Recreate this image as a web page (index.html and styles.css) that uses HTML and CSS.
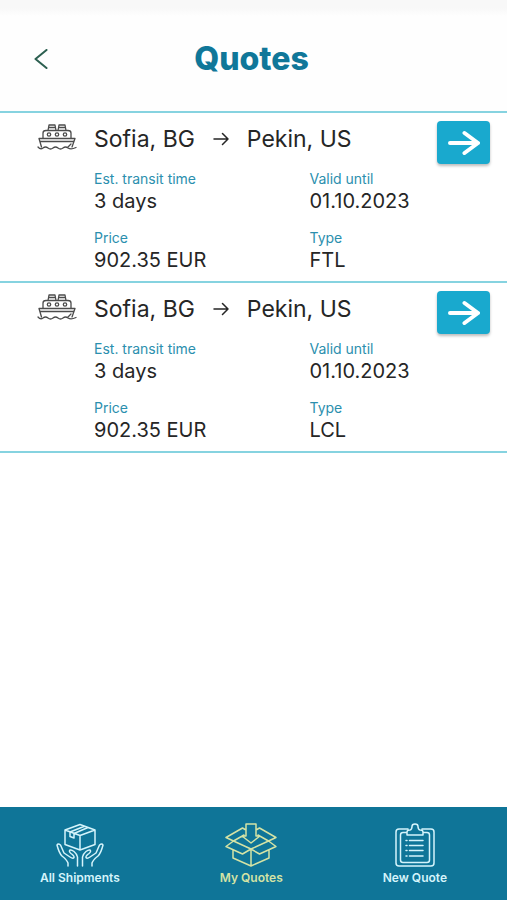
FILE: index.html
```html
<!DOCTYPE html>
<html lang="en">
<head>
<meta charset="utf-8">
<meta name="viewport" content="width=device-width, initial-scale=1">
<title>Quotes</title>
<link rel="stylesheet" href="styles.css">
</head>
<body>
<svg class="sprite" aria-hidden="true">
  <symbol id="ship" viewBox="0 0 40 28">
    <path d="M2 15.500H38L35 24M2 15.500L4.500 24M3 18.500H36.500M6 15V10Q6 7.500 9 7.500H31Q34 7.500 34 10V15M11 7.500L12 2H18L19 7.500M11.500 4.500H18.500M21 7.500L22 2H28L29 7.500M21.500 4.500H28.500M1 24Q3.500 27 6 25Q8.500 23 11 25Q13.500 27 16 25Q18.500 23 21 25Q23.500 27 26 25Q28.500 23 31 25Q34 27 39 24.500M34 21L31 24"/>
    <circle cx="12" cy="11.500" r="1.700"/><circle cx="20" cy="11.500" r="1.700"/><circle cx="28" cy="11.500" r="1.700"/>
  </symbol>
  <symbol id="route" viewBox="0 0 16 14">
    <path d="M1 7H15M9.500 1.500L15 7L9.500 12.500"/>
  </symbol>
  <symbol id="go" viewBox="0 0 32 26">
    <path d="M2 13H30M16.500 3L30 13L16.500 23"/>
  </symbol>
</svg>

<header class="header">
  <button class="back" type="button" aria-label="Back">
    <svg viewBox="0 0 14 20"><path d="M12.500 1L1.500 10L12.500 19"/></svg>
  </button>
  <h1 class="title">Quotes</h1>
</header>

<main class="quotes">
  <article class="quote">
    <svg class="ship"><use href="#ship"/></svg>
    <div class="top">
      <h2 class="route">Sofia, BG <svg class="to"><use href="#route"/></svg> Pekin, US</h2>
      <button class="open" type="button" aria-label="Open quote"><svg><use href="#go"/></svg></button>
    </div>
    <dl class="facts">
      <div><dt>Est. transit time</dt><dd>3 days</dd></div>
      <div><dt>Valid until</dt><dd>01.10.2023</dd></div>
      <div><dt>Price</dt><dd>902.35 EUR</dd></div>
      <div><dt>Type</dt><dd>FTL</dd></div>
    </dl>
  </article>
  <article class="quote">
    <svg class="ship"><use href="#ship"/></svg>
    <div class="top">
      <h2 class="route">Sofia, BG <svg class="to"><use href="#route"/></svg> Pekin, US</h2>
      <button class="open" type="button" aria-label="Open quote"><svg><use href="#go"/></svg></button>
    </div>
    <dl class="facts">
      <div><dt>Est. transit time</dt><dd>3 days</dd></div>
      <div><dt>Valid until</dt><dd>01.10.2023</dd></div>
      <div><dt>Price</dt><dd>902.35 EUR</dd></div>
      <div><dt>Type</dt><dd>LCL</dd></div>
    </dl>
  </article>
</main>

<nav class="tabs">
  <a class="tab" href="#shipments">
    <svg viewBox="0 0 48 44">
      <path d="M24 1.500L39 7V21.500L24 27L9 21.500V7ZM9 7L24 12.500L39 7M24 12.500V27M14 9V13.500L18 15V10.500L32 4.500M14 9L28.500 3.200"/>
      <path d="M12 43V40Q11 37 6 33Q3 30 1 22Q2 20 4.500 22L8 30L14 34Q17 36 18 34.500Q18.500 33 15 30.500Q12.500 28.500 14 27Q15.500 26.500 18 28.500Q21 31 21.500 34V43"/>
      <path d="M36 43V40Q37 37 42 33Q45 30 47 22Q46 20 43.500 22L40 30L34 34Q31 36 30 34.500Q29.500 33 33 30.500Q35.500 28.500 34 27Q32.500 26.500 30 28.500Q27 31 26.500 34V43"/>
    </svg>
    <span>All Shipments</span>
  </a>
  <a class="tab active" href="#quotes" aria-current="page">
    <svg viewBox="0 0 52 44">
      <path d="M21 1H31V13H35L26 20L17 13H21ZM21 7L17.500 5L1 14.500L8.500 18L1 23.500L17.500 31L26 26L34.500 31L51 23.500L43.500 18L51 14.500L34.500 5L31 7M8.500 18L19 12M43.500 18L33 12M8.500 18L26 26L43.500 18M8 27V35L26 43L44 35V27M26 26V43"/>
    </svg>
    <span>My Quotes</span>
  </a>
  <a class="tab" href="#new">
    <svg viewBox="0 0 40 44">
      <path d="M13 6H4Q1 6 1 9V40Q1 43 4 43H36Q39 43 39 40V9Q39 6 36 6H27M11 9.500H8Q5.500 9.500 5.500 12V37Q5.500 39.500 8 39.500H32Q34.500 39.500 34.500 37V12Q34.500 9.500 32 9.500H29M12 12V9Q12 7 15 7Q17 6.500 17 3.500Q17 1 20 1Q23 1 23 3.500Q23 6.500 25 7Q28 7 28 9V12ZM14.500 17.500H28M14.500 22.500H28M14.500 27.500H28M14.500 33H28M11 17.500H12M11 22.500H12M11 27.500H12M11 33H12"/>
    </svg>
    <span>New Quote</span>
  </a>
</nav>
</body>
</html>
```
FILE: styles.css
```css
* {
  box-sizing: border-box;
}

body {
  display: flex;
  flex-direction: column;
  min-height: 100vh;
  margin: 0;
  background: #fff;
  color: #262626;
  font-family: Inter, "Open Sans", sans-serif;
}

svg {
  display: block;
  fill: none;
  stroke: currentColor;
  stroke-linecap: round;
  stroke-linejoin: round;
}

.sprite {
  position: absolute;
  width: 0;
  height: 0;
}

button {
  padding: 0;
  border: 0;
  cursor: pointer;
}

.header {
  display: grid;
  grid-template-columns: 48px 1fr 52px;
  align-items: center;
  padding: 40px 0 34px;
  background: linear-gradient(#f8f8f8 8px, #fefefe 16px);
}

.back {
  justify-self: end;
  background: none;
  color: #2c5f50;
}

.back svg {
  width: 14px;
  height: 20px;
  stroke-width: 2;
}

.title {
  margin: 0;
  color: #107799;
  font-size: 32px;
  font-weight: 800;
  line-height: 37px;
  text-align: center;
}

.quotes {
  flex: 1;
  border-top: 2px solid #86d3e0;
}

.quote {
  display: grid;
  grid-template-columns: 94px 1fr;
  padding-bottom: 8px;
  border-bottom: 2px solid #86d3e0;
}

.ship {
  width: 40px;
  height: 28px;
  margin: 10px 0 0 37px;
  color: #4c4c4c;
  stroke-width: 1.3;
}

.top {
  display: flex;
  align-items: flex-start;
  justify-content: space-between;
  padding: 8px 17px 6px 0;
}

.route {
  display: flex;
  align-items: center;
  gap: 18px;
  margin: 4px 0 0;
  font-size: 23px;
  font-weight: 400;
  line-height: 28px;
}

.to {
  width: 16px;
  height: 14px;
  stroke-width: 1.5;
}

.open {
  display: grid;
  place-items: center;
  width: 53px;
  height: 43px;
  border-radius: 4px;
  background: #19a9ce;
  box-shadow: 0 2px 3px #0004;
  color: #fff;
}

.open svg {
  width: 32px;
  height: 26px;
  stroke-width: 4;
}

.facts {
  display: grid;
  grid-template-columns: 12fr 11fr;
  grid-column: 2;
  row-gap: 15px;
  margin: 0;
}

dt {
  color: #2b8fae;
  font-size: 14px;
  line-height: 18px;
}

dd {
  margin: 0;
  font-size: 20px;
  line-height: 26px;
}

.tabs {
  display: flex;
  justify-content: space-between;
  padding: 16px 60px 14px 40px;
  background: #0f7598;
}

.tab {
  display: flex;
  flex-direction: column;
  align-items: center;
  gap: 3px;
  color: #d5f4fb;
  font-size: 12px;
  font-weight: 600;
  line-height: 16px;
  text-decoration: none;
}

.tab svg {
  height: 44px;
  stroke-width: 1.5;
}

.active {
  color: #d4e3a5;
}
```
